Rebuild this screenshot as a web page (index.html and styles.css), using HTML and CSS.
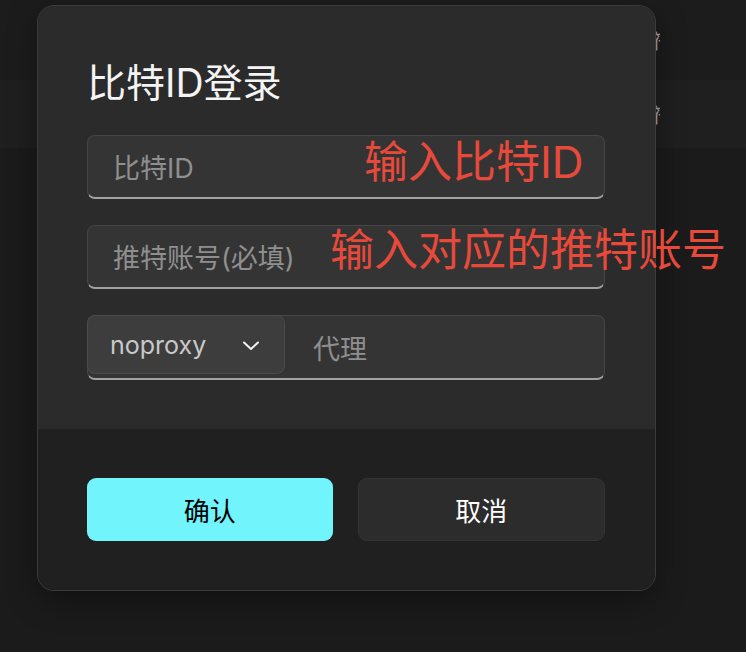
FILE: index.html
```html
<!DOCTYPE html>
<html>
<head>
    <meta charset="UTF-8">
    <title>比特ID登录</title>
    <link rel="stylesheet" href="styles.css">
</head>
<body>
<div class="page">
    <!-- 背后的列表，被弹窗挡住 -->
    <div class="bgList">
        <div class="bgRow rowTop"><span class="bgLabel">符号</span></div>
        <div class="bgRow rowMid"><span class="bgLabel">符号</span></div>
        <div class="bgRow rowRest"></div>
    </div>

    <div class="dialog">
        <div class="dialogBody">
            <div class="dialogTitle">比特ID登录</div>
            <div class="field">
                <span class="placeholder">比特ID</span>
            </div>
            <div class="field">
                <span class="placeholder">推特账号(必填)</span>
            </div>
            <div class="field fieldGroup">
                <div class="selectBox">
                    <span class="selectText">noproxy</span>
                    <svg class="chevron" width="18" height="10" viewBox="0 0 18 10">
                        <path d="M2 1.5 L9 8 L16 1.5" fill="none" stroke="#f2f2f2" stroke-width="2" stroke-linecap="round" stroke-linejoin="round"/>
                    </svg>
                </div>
                <span class="placeholder proxyText">代理</span>
            </div>
        </div>
        <div class="dialogFooter">
            <div class="btn btnPrimary">确认</div>
            <div class="btn btnCancel">取消</div>
        </div>
    </div>

    <!-- 红字标注 -->
    <div class="note noteId">输入比特ID</div>
    <div class="note noteAccount">输入对应的推特账号</div>
</div>
</body>
</html>
```

FILE: styles.css
```css
html, body {
    margin: 0;
    padding: 0;
    background-color: #1b1b1b;
}

body {
    font-family: Inter, "Noto Sans CJK SC", sans-serif;
}

.page {
    position: relative;
    width: 746px;
    height: 652px;
    overflow: hidden;
}

.bgList {
    display: flex;
    flex-direction: column;
}

.bgRow {
    display: flex;
    align-items: center;
}

.rowTop {
    height: 80px;
    background-color: #1c1c1c;
}

.rowMid {
    height: 68px;
    background-color: #1f1f1f;
}

.rowRest {
    height: 504px;
    background-color: #1b1b1b;
}

.bgLabel {
    display: block;
    box-sizing: border-box;
    width: 660px;
    padding-left: 652px;
    overflow: hidden;
    white-space: nowrap;
    font-size: 20px;
    color: #a8a8a8;
    -webkit-font-smoothing: antialiased;
}

/* 弹窗 */
.dialog {
    position: absolute;
    left: 37px;
    top: 5px;
    width: 619px;
    box-sizing: border-box;
    border: solid 1px #3b3b3b;
    border-radius: 17px;
    overflow: hidden;
    box-shadow: 0 10px 30px rgba(0, 0, 0, 0.35);
}

.dialogBody {
    background-color: #2b2b2b;
    padding: 55px 50px 49px 49px;
    display: flex;
    flex-direction: column;
    gap: 26px;
}

.dialogTitle {
    font-size: 39px;
    line-height: 44px;
    color: #f4f4f4;
    margin-bottom: 4px;
}

.field {
    box-sizing: border-box;
    height: 64px;
    display: flex;
    align-items: center;
    padding-left: 25px;
    background-color: #343434;
    border: solid 1px #464646;
    border-bottom: solid 2px #a2a2a2;
    border-radius: 8px;
}

.placeholder {
    font-size: 27px;
    color: #8f8f8f;
}

.fieldGroup {
    height: 65px;
    padding-left: 0;
    align-items: flex-start;
}

.selectBox {
    box-sizing: border-box;
    width: 198px;
    height: 59px;
    margin: -1px 0 0 -1px;
    display: flex;
    align-items: center;
    justify-content: space-between;
    padding: 0 24px 0 22px;
    background-color: #3d3d3d;
    border: solid 1px #4b4b4b;
    border-radius: 8px;
}

.selectText {
    font-size: 25px;
    color: #c9c9c9;
}

.chevron {
    margin-top: 2px;
}

.proxyText {
    align-self: center;
    padding-left: 28px;
}

.dialogFooter {
    background-color: #202020;
    padding: 49px 50px 49px 49px;
    display: flex;
    gap: 25px;
}

.btn {
    flex: 1;
    box-sizing: border-box;
    height: 63px;
    display: flex;
    align-items: center;
    justify-content: center;
    font-size: 26px;
    border-radius: 9px;
}

.btnPrimary {
    background-color: #72f4fd;
    color: #000;
}

.btnCancel {
    background-color: #2c2c2c;
    border: solid 1px #333;
    color: #fff;
}

/* 红色标注文字 */
.note {
    position: absolute;
    font-size: 44px;
    line-height: 44px;
    color: #e7493b;
    white-space: nowrap;
}

.noteId {
    left: 364px;
    top: 140px;
}

.noteAccount {
    left: 330px;
    top: 228px;
}
```
